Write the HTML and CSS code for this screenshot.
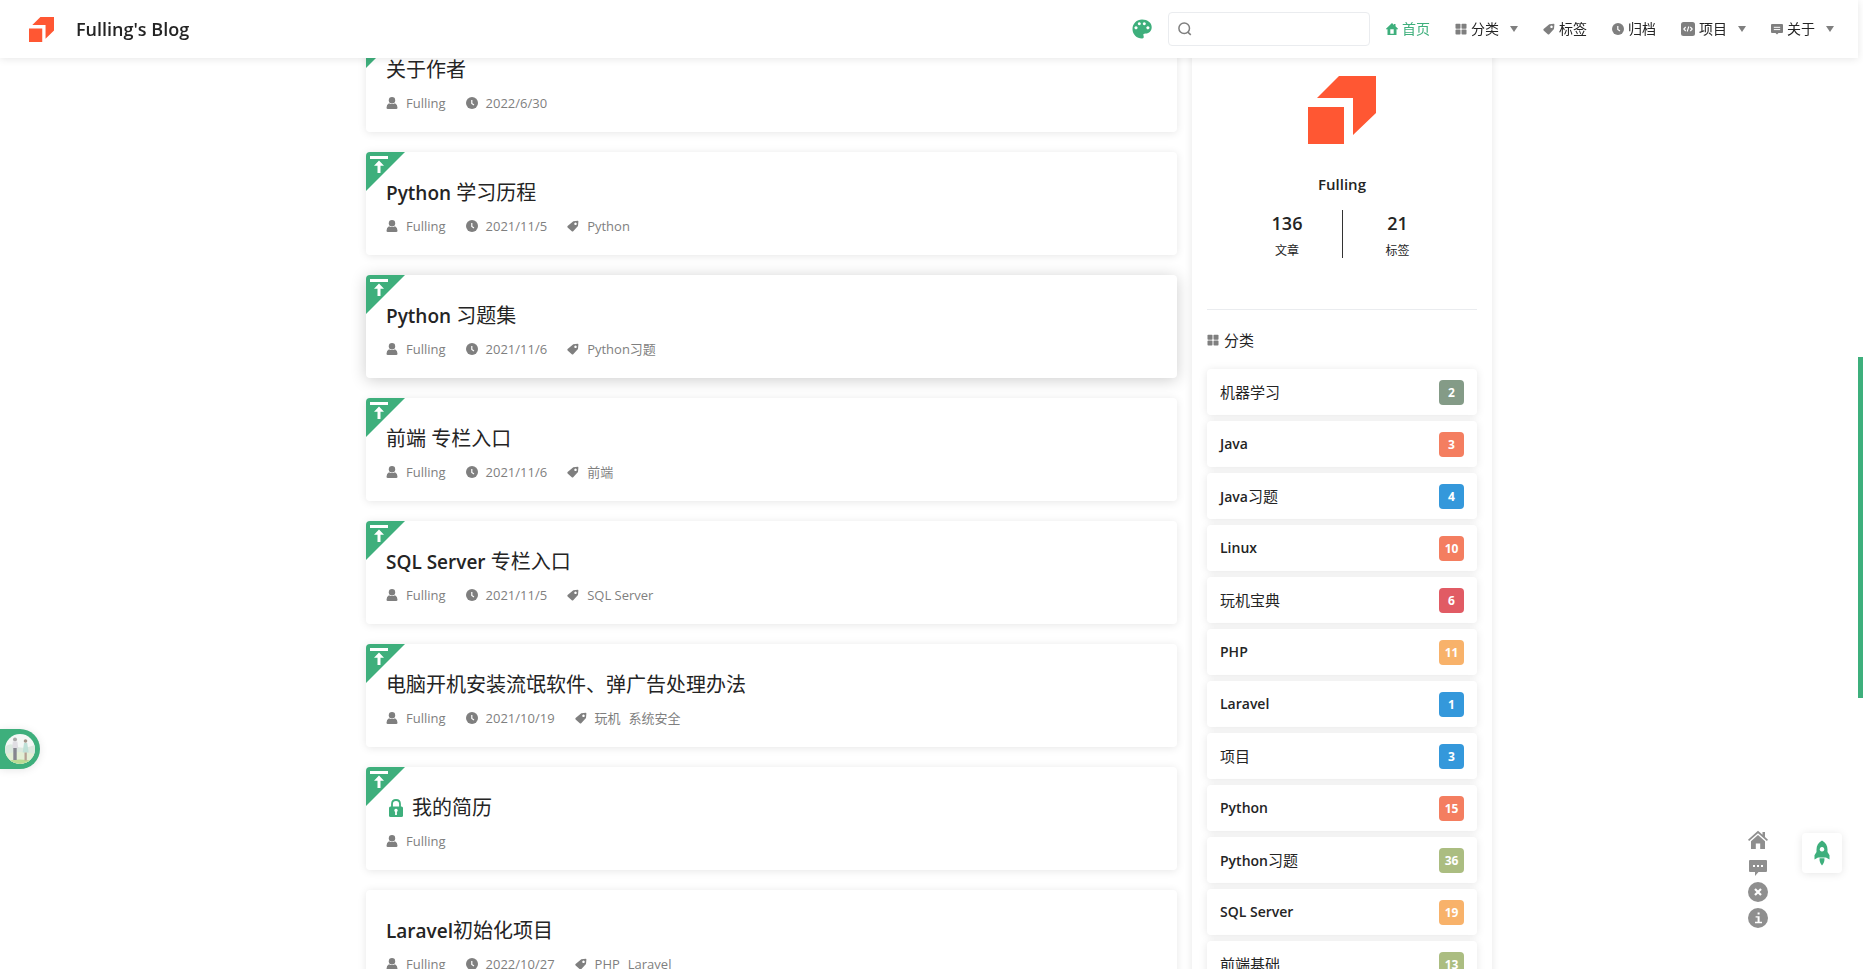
FILE: index.html
```html
<!DOCTYPE html>
<html lang="zh-CN">
<head>
<meta charset="utf-8">
<title>Fulling's Blog</title>
<link rel="stylesheet" href="styles.css">
</head>
<body>
<svg class="sprite" aria-hidden="true">
  <symbol id="logo" viewBox="0 0 68 68"><path d="M0 31h36v37H0zM31 0h37v37L45 59V22H9z" fill="#ff5733"/></symbol>
  <symbol id="home" viewBox="0 0 12 12"><path fill-rule="evenodd" d="M6 0l2 1.900V1h1.500v2.300L12 5.700v.6h-1.500V12h-9V6.300H0v-.6zM4.300 6.200v4.500h3.400V6.200z"/></symbol>
  <symbol id="grid" viewBox="0 0 12 12"><rect x=".5" y=".8" width="5" height="5" rx=".8"/><rect x="6.500" y=".8" width="5" height="5" rx=".8"/><rect x=".5" y="6.600" width="5" height="5" rx=".8"/><rect x="6.500" y="6.600" width="5" height="5" rx=".8"/></symbol>
  <symbol id="tag" viewBox="0 0 12 12"><path fill-rule="evenodd" d="M6.300 1.300L10.800.8q.6 0 .6.600L11 6 6.200 11.200q-.7.600-1.400 0L.6 7.400q-.6-.7 0-1.400zM8.500 2.600a1.250 1.250 0 1 0 .01 0z"/></symbol>
  <symbol id="clock" viewBox="0 0 12 12"><circle cx="6" cy="6" r="6"/><path d="M5.800 3v3.500l2.200 1.400" fill="none" stroke="#fff" stroke-width="1.200"/></symbol>
  <symbol id="code" viewBox="0 0 14 14"><rect width="14" height="14" rx="2.500"/><path d="M4.700 5L2.800 7l1.900 2M9.300 5l1.900 2-1.900 2M7.800 4.500l-1.600 5" fill="none" stroke="#fff" stroke-width="1.100"/></symbol>
  <symbol id="message" viewBox="0 0 12 12"><path d="M1 1h10q1 0 1 1v7q0 1-1 1H7.500L6 11.500 4.500 10H1Q0 10 0 9V2q0-1 1-1z"/><path d="M2.800 4.300h6.400M2.800 6.600h6.400" stroke="#fff" stroke-width="1"/></symbol>
  <symbol id="user" viewBox="0 0 12 12"><circle cx="6" cy="3.200" r="3.200"/><path d="M3 6.200q3 1.800 6 0 2.500 1.400 2.500 4.600 0 1.200-1.300 1.200H1.800Q.5 12 .5 10.800.5 7.600 3 6.200z"/></symbol>
  <symbol id="top" viewBox="0 0 18 18"><path d="M0 1h18v3H0zM9 5.500l5 5.200h-3.500V18h-3v-7.300H4z"/></symbol>
  <symbol id="lock" viewBox="0 0 16 18"><path d="M4 8V5q0-4 4-4t4 4v3" fill="none" stroke="currentColor" stroke-width="1.800"/><rect x="1" y="7.500" width="14" height="10.500" rx="1.500"/><path d="M8 9.800a1.800 1.800 0 0 1 .9 3.300V16H7.100v-2.900A1.800 1.800 0 0 1 8 9.800z" fill="#fff"/></symbol>
  <symbol id="palette" viewBox="0 0 20 20"><path fill-rule="evenodd" d="M10 .5c5.600 0 9.700 3.300 9.700 7.400 0 4-2.600 6.500-6 6.500-2.300 0-2.700.7-2.200 2.200.6 1.800.2 2.900-1.500 2.900C4.600 19.500.5 15.300.5 10S4.700.5 10 .5zM4 7.200a1.600 1.600 0 1 0 .01 0zM7.300 3.200a1.500 1.500 0 1 0 .01 0zM12.300 3.200a1.500 1.500 0 1 0 .01 0zM15.900 7.200a1.600 1.600 0 1 0 .01 0z"/></symbol>
  <symbol id="search" viewBox="0 0 14 14"><circle cx="6.200" cy="6.200" r="5.300" fill="none" stroke="currentColor" stroke-width="1.500"/><path d="M9.800 10.200l3 2.600" stroke="currentColor" stroke-width="1.600"/></symbol>
  <symbol id="house" viewBox="0 0 20 20"><path d="M10 .8l4.500 4V2H17v5l3 2.800-1.100 1.300L10 3.300l-8.900 7.800L0 9.800z"/><path d="M10 5l7 6.200V19h-4.800v-5.500H7.800V19H3v-7.800z"/></symbol>
  <symbol id="comment" viewBox="0 0 20 20"><path d="M2 4h16q1 0 1 1v10q0 1-1 1h-7.500L7 20v-4H2q-1 0-1-1V5q0-1 1-1z"/><path d="M5 9h2v2H5zM9 9h2v2H9zM13 9h2v2h-2z" fill="#fff"/></symbol>
  <symbol id="close" viewBox="0 0 20 20"><circle cx="10" cy="10" r="10"/><path d="M7 7l6 6M13 7l-6 6" stroke="#fff" stroke-width="2.200"/></symbol>
  <symbol id="info" viewBox="0 0 20 20"><circle cx="10" cy="10" r="10"/><path d="M9.600 4.500h2v2h-2zM7.600 8.200h4v5.600H14v1.400H7v-1.400h2.600V9.600h-2z" fill="#fff"/></symbol>
  <symbol id="rocket" viewBox="0 0 16 26"><path fill-rule="evenodd" d="M8 .5c3.600 2 5.500 5.300 5.500 9v2.500l2 3.200V19.500L12 17.500H4L.5 19.500v-4.300l2-3.200V9.500c0-3.700 1.900-7 5.500-9zM8 7a2.300 2.300 0 1 0 .01 0zM5.600 18.300h4.800q.5 4-2.400 7.200Q5.100 22.300 5.600 18.300z"/></symbol>
</svg>

<header class="navbar">
  <a class="brand" href="#"><svg class="brand-logo"><use href="#logo"/></svg><span>Fulling's Blog</span></a>
  <div class="tools">
    <button class="theme" aria-label="主题"><svg class="icon-20"><use href="#palette"/></svg></button>
    <label class="search"><svg class="icon-14"><use href="#search"/></svg><input type="text" aria-label="搜索"></label>
    <nav class="menu">
      <a class="active" href="#"><svg class="icon-12"><use href="#home"/></svg>首页</a>
      <a href="#"><svg class="icon-12"><use href="#grid"/></svg>分类<i class="arrow"></i></a>
      <a href="#"><svg class="icon-12"><use href="#tag"/></svg>标签</a>
      <a href="#"><svg class="icon-12"><use href="#clock"/></svg>归档</a>
      <a href="#"><svg class="icon-14"><use href="#code"/></svg>项目<i class="arrow"></i></a>
      <a href="#"><svg class="icon-12"><use href="#message"/></svg>关于<i class="arrow"></i></a>
    </nav>
  </div>
</header>

<main class="page">
  <section class="posts">
    <article class="card">
      <span class="pin"><svg class="pin-icon"><use href="#top"/></svg></span>
      <h2><a href="#">关于作者</a></h2>
      <div class="meta"><span><svg class="icon-12"><use href="#user"/></svg>Fulling</span><span><svg class="icon-12"><use href="#clock"/></svg>2022/6/30</span></div>
    </article>
    <article class="card">
      <span class="pin"><svg class="pin-icon"><use href="#top"/></svg></span>
      <h2><a href="#"><span class="latin">Python</span> 学习历程</a></h2>
      <div class="meta"><span><svg class="icon-12"><use href="#user"/></svg>Fulling</span><span><svg class="icon-12"><use href="#clock"/></svg>2021/11/5</span><span><svg class="icon-12"><use href="#tag"/></svg><a href="#">Python</a></span></div>
    </article>
    <article class="card raised">
      <span class="pin"><svg class="pin-icon"><use href="#top"/></svg></span>
      <h2><a href="#"><span class="latin">Python</span> 习题集</a></h2>
      <div class="meta"><span><svg class="icon-12"><use href="#user"/></svg>Fulling</span><span><svg class="icon-12"><use href="#clock"/></svg>2021/11/6</span><span><svg class="icon-12"><use href="#tag"/></svg><a href="#">Python习题</a></span></div>
    </article>
    <article class="card">
      <span class="pin"><svg class="pin-icon"><use href="#top"/></svg></span>
      <h2><a href="#">前端 专栏入口</a></h2>
      <div class="meta"><span><svg class="icon-12"><use href="#user"/></svg>Fulling</span><span><svg class="icon-12"><use href="#clock"/></svg>2021/11/6</span><span><svg class="icon-12"><use href="#tag"/></svg><a href="#">前端</a></span></div>
    </article>
    <article class="card">
      <span class="pin"><svg class="pin-icon"><use href="#top"/></svg></span>
      <h2><a href="#"><span class="latin">SQL Server</span> 专栏入口</a></h2>
      <div class="meta"><span><svg class="icon-12"><use href="#user"/></svg>Fulling</span><span><svg class="icon-12"><use href="#clock"/></svg>2021/11/5</span><span><svg class="icon-12"><use href="#tag"/></svg><a href="#">SQL Server</a></span></div>
    </article>
    <article class="card">
      <span class="pin"><svg class="pin-icon"><use href="#top"/></svg></span>
      <h2><a href="#">电脑开机安装流氓软件、弹广告处理办法</a></h2>
      <div class="meta"><span><svg class="icon-12"><use href="#user"/></svg>Fulling</span><span><svg class="icon-12"><use href="#clock"/></svg>2021/10/19</span><span><svg class="icon-12"><use href="#tag"/></svg><a href="#">玩机</a><a href="#">系统安全</a></span></div>
    </article>
    <article class="card">
      <span class="pin"><svg class="pin-icon"><use href="#top"/></svg></span>
      <h2><svg class="lock"><use href="#lock"/></svg><a href="#">我的简历</a></h2>
      <div class="meta"><span><svg class="icon-12"><use href="#user"/></svg>Fulling</span></div>
    </article>
    <article class="card">
      <h2><a href="#"><span class="latin">Laravel</span>初始化项目</a></h2>
      <div class="meta"><span><svg class="icon-12"><use href="#user"/></svg>Fulling</span><span><svg class="icon-12"><use href="#clock"/></svg>2022/10/27</span><span><svg class="icon-12"><use href="#tag"/></svg><a href="#">PHP</a><a href="#">Laravel</a></span></div>
    </article>
  </section>

  <aside class="sidebar">
    <div class="profile">
      <svg class="avatar"><use href="#logo"/></svg>
      <h3>Fulling</h3>
      <div class="stats">
        <div><strong>136</strong><span>文章</span></div>
        <div><strong>21</strong><span>标签</span></div>
      </div>
    </div>
    <h4><svg class="icon-12"><use href="#grid"/></svg>分类</h4>
    <ul class="categories">
      <li><a href="#"><span>机器学习</span><b class="sage">2</b></a></li>
      <li><a href="#"><span class="latin">Java</span><b class="coral">3</b></a></li>
      <li><a href="#"><span><span class="latin">Java</span>习题</span><b class="blue">4</b></a></li>
      <li><a href="#"><span class="latin">Linux</span><b class="coral">10</b></a></li>
      <li><a href="#"><span>玩机宝典</span><b class="red">6</b></a></li>
      <li><a href="#"><span class="latin">PHP</span><b class="amber">11</b></a></li>
      <li><a href="#"><span class="latin">Laravel</span><b class="blue">1</b></a></li>
      <li><a href="#"><span>项目</span><b class="blue">3</b></a></li>
      <li><a href="#"><span class="latin">Python</span><b class="coral">15</b></a></li>
      <li><a href="#"><span><span class="latin">Python</span>习题</span><b class="olive">36</b></a></li>
      <li><a href="#"><span class="latin">SQL Server</span><b class="amber">19</b></a></li>
      <li><a href="#"><span>前端基础</span><b class="olive">13</b></a></li>
    </ul>
  </aside>
</main>

<button class="player" aria-label="音乐">
  <svg viewBox="0 0 30 30">
    <defs><clipPath id="round"><circle cx="15" cy="15" r="15"/></clipPath></defs>
    <g clip-path="url(#round)">
      <rect width="30" height="30" fill="#f4f7f5"/>
      <path d="M0 13q5-5 10-1 7 4 20-1v10H0z" fill="#dce9df"/>
      <path d="M0 20q15-4 30 0v10H0z" fill="#e3efd5"/>
      <path d="M0 27q15-3 30 0v3H0z" fill="#b9db94"/>
      <circle cx="10" cy="5.500" r="2" fill="#aaa8a8"/>
      <path d="M7.800 7.500h4.600l.8 7h-6z" fill="#e0dee3"/><path d="M8.300 14h3.400v12H8.300z" fill="#85868f"/>
      <circle cx="20.500" cy="7" r="1.800" fill="#a39488"/>
      <path d="M19 9h3.200l1.500 9.500h-6z" fill="#bfe0d7"/><path d="M19.500 18.500h2.300v8h-2.300z" fill="#b5a193"/>
    </g>
  </svg>
</button>

<div class="shortcuts">
  <a href="#" aria-label="首页"><svg class="icon-20"><use href="#house"/></svg></a>
  <a href="#" aria-label="评论"><svg class="icon-20"><use href="#comment"/></svg></a>
  <button aria-label="关闭"><svg class="icon-20"><use href="#close"/></svg></button>
  <button aria-label="信息"><svg class="icon-20"><use href="#info"/></svg></button>
</div>
<button class="to-top" aria-label="返回顶部"><svg><use href="#rocket"/></svg></button>
<div class="scrollbar"></div>
</body>
</html>
```
FILE: styles.css
```css
:root {
  --accent: #3eaf7c;
  --text: #242424;
  --muted: #7f7f7f;
  --shadow: 0 1px 8px rgba(0, 0, 0, .1);
}
* { box-sizing: border-box; }
body {
  height: 100vh;
  margin: 0;
  padding-right: 5px;
  overflow: hidden;
  background: #fff;
  color: var(--text);
  font: 400 14px/20px "Open Sans", "Noto Sans CJK SC", sans-serif;
}
a { color: inherit; text-decoration: none; }
button { padding: 0; border: 0; background: none; color: inherit; cursor: pointer; }
svg { display: block; flex: none; fill: currentColor; }
h2, h3, h4, ul { margin: 0; padding: 0; font-weight: 400; }
.latin { font-weight: 600; }
.sprite { position: absolute; width: 0; height: 0; }
.icon-12 { width: 12px; height: 12px; }
.icon-14 { width: 14px; height: 14px; }
.icon-20 { width: 20px; height: 20px; }

.navbar {
  position: fixed;
  z-index: 10;
  top: 0;
  left: 0;
  right: 5px;
  display: flex;
  align-items: center;
  justify-content: space-between;
  height: 58px;
  padding: 0 24px 0 29px;
  background: #fff;
  box-shadow: var(--shadow);
}
.brand { display: flex; align-items: center; gap: 22px; font-size: 18px; font-weight: 600; line-height: 24px; }
.brand-logo { width: 25px; height: 25px; }
.tools { display: flex; align-items: center; gap: 16px; }
.theme { color: var(--accent); }
.search {
  display: flex;
  align-items: center;
  gap: 8px;
  width: 202px;
  height: 34px;
  padding: 0 9px;
  border: 1px solid #eaecef;
  border-radius: 4px;
  color: var(--muted);
}
.search input { flex: 1; min-width: 0; border: 0; outline: 0; background: none; font: inherit; }
.menu { display: flex; gap: 25px; }
.menu a { display: flex; align-items: center; gap: 4px; }
.menu svg { color: var(--muted); }
.menu .active, .menu .active svg { color: var(--accent); }
.arrow {
  margin-left: 7px;
  border-left: 4px solid transparent;
  border-right: 4px solid transparent;
  border-top: 6px solid var(--muted);
}

.page {
  display: flex;
  align-items: flex-start;
  gap: 15px;
  max-width: 1126px;
  margin: 0 auto;
  padding-top: 29px;
}
.posts { flex: 1; display: flex; flex-direction: column; gap: 20px; }
.card { position: relative; padding: 26px 20px 19px; border-radius: 4px; background: #fff; box-shadow: var(--shadow); }
.raised { box-shadow: 0 2px 16px rgba(0, 0, 0, .2); }
.pin {
  position: absolute;
  top: 0;
  left: 0;
  width: 39px;
  height: 39px;
  padding: 3px 4px;
  border-top-left-radius: 4px;
  background: var(--accent);
  clip-path: polygon(0 0, 100% 0, 0 100%);
  color: #fff;
}
.pin-icon { width: 18px; height: 18px; }
.card h2 { display: flex; align-items: center; gap: 6px; font-size: 20px; line-height: 30px; }
.card .latin { font-size: 19px; }
.lock { width: 20px; height: 18px; color: var(--accent); }
.meta { display: flex; gap: 20px; margin-top: 8px; color: var(--muted); font-size: 13px; line-height: 20px; }
.meta span { display: flex; align-items: center; gap: 8px; }

.sidebar { width: 300px; padding: 47px 15px 15px; background: #fff; box-shadow: var(--shadow); }
.profile { display: flex; flex-direction: column; align-items: center; padding-bottom: 51px; border-bottom: 1px solid #eaecef; }
.avatar { width: 68px; height: 68px; }
.profile h3 { margin: 28px 0 14px; font-size: 15px; font-weight: 600; line-height: 24px; }
.stats { display: grid; grid-template-columns: 1fr 1fr; width: 220px; }
.stats div { display: flex; flex-direction: column; align-items: center; gap: 5px; height: 48px; }
.stats div + div { border-left: 1px solid #333; }
.stats strong { font-size: 18px; font-weight: 600; line-height: 26px; }
.stats span { font-size: 12px; line-height: 20px; }
.sidebar h4 { display: flex; align-items: center; gap: 5px; margin: 20px 0 19px; font-size: 15px; line-height: 20px; }
.sidebar h4 svg { color: var(--muted); }
.categories { display: flex; flex-direction: column; gap: 6px; list-style: none; }
.categories a {
  display: flex;
  align-items: center;
  justify-content: space-between;
  height: 46px;
  padding: 0 13px;
  border-radius: 4px;
  background: #fff;
  box-shadow: var(--shadow);
  font-size: 15px;
}
.categories .latin { font-size: 14px; }
.categories b { width: 25px; border-radius: 4px; color: #fff; font-size: 12px; font-weight: 700; line-height: 25px; text-align: center; }
.sage { background: #849b87; }
.coral { background: #f47e60; }
.blue { background: #3498db; }
.red { background: #e15b64; }
.amber { background: #f8b26a; }
.olive { background: #abbd81; }

.player { position: fixed; left: 0; bottom: 200px; width: 40px; height: 40px; padding: 5px; border-radius: 0 20px 20px 0; background: var(--accent); box-shadow: var(--shadow); }
.player svg { width: 30px; height: 30px; }
.shortcuts { position: fixed; right: 95px; bottom: 41px; display: flex; flex-direction: column; gap: 6px; color: #8f8f8f; }
.to-top { position: fixed; right: 21px; bottom: 96px; display: grid; place-items: center; width: 40px; height: 40px; border-radius: 4px; background: #fff; color: var(--accent); box-shadow: var(--shadow); }
.to-top svg { width: 16px; height: 26px; }
.scrollbar { position: fixed; z-index: 20; top: 357px; right: 0; width: 5px; height: 341px; background: var(--accent); }
```
